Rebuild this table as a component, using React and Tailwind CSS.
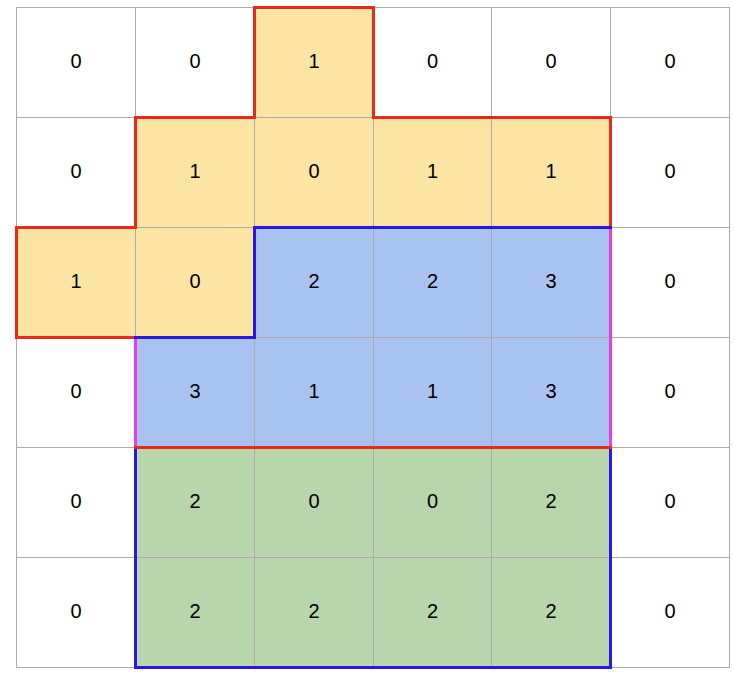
import React from "react";

const rows = [
  ["0", "0", "1", "0", "0", "0"],
  ["0", "1", "0", "1", "1", "0"],
  ["1", "0", "2", "2", "3", "0"],
  ["0", "3", "1", "1", "3", "0"],
  ["0", "2", "0", "0", "2", "0"],
  ["0", "2", "2", "2", "2", "0"],
];

// which fill each cell has: y = yellow, b = blue, g = green
const fills = [
  ["", "", "y", "", "", ""],
  ["", "y", "y", "y", "y", ""],
  ["y", "y", "b", "b", "b", ""],
  ["", "b", "b", "b", "b", ""],
  ["", "g", "g", "g", "g", ""],
  ["", "g", "g", "g", "g", ""],
];

const fillClass = {
  y: "bg-[#fce5a3]",
  b: "bg-[#a9c3f0]",
  g: "bg-[#b7d6ab]",
  "": "bg-white",
};

const X = [0.5, 119.5, 238.5, 357.5, 475.5, 594.5, 713.5];
const Y = [0.5, 110.5, 220.5, 330.5, 440.5, 550.5, 660.5];

const RED = "#e8291e";
const BLUE = "#2b17e4";
const PINK = "#e63de6";

const Outlines = () => (
  <svg
    className="absolute left-0 top-0 pointer-events-none overflow-visible"
    width="714"
    height="661"
    fill="none"
    strokeWidth="3"
    strokeLinejoin="miter"
  >
    <path
      stroke={RED}
      d={`M${X[2]},${Y[0]} H${X[3]} V${Y[1]} H${X[5]} V${Y[2]} H${X[2]} V${Y[3]} H${X[0]} V${Y[2]} H${X[1]} V${Y[1]} H${X[2]} Z`}
    />
    <path stroke={PINK} d={`M${X[5]},${Y[2]} V${Y[4]} M${X[1]},${Y[3]} V${Y[4]}`} />
    <path
      stroke={BLUE}
      strokeLinecap="square"
      d={`M${X[1]},${Y[3]} H${X[2]} V${Y[2]} H${X[5]}`}
    />
    <path stroke={BLUE} strokeLinecap="square" d={`M${X[1]},${Y[4]} V${Y[6]} H${X[5]} V${Y[4]}`} />
    <path stroke={RED} strokeLinecap="square" d={`M${X[1]},${Y[4]} H${X[5]}`} />
  </svg>
);

export default function App() {
  return (
    <div className="w-[735px] h-[675px] bg-white pt-[7px] pl-[16px] font-['Liberation_Sans',Arial,sans-serif]">
      <div className="relative w-[714px]">
        <div className="grid grid-cols-[119px_119px_119px_118px_119px_119px] grid-rows-[repeat(6,110px)] border-l border-t border-[#ababab]">
          {rows.map((row, r) =>
            row.map((v, c) => (
              <div
                key={`${r}-${c}`}
                className={`flex items-center justify-center border-r border-b border-[#ababab] text-[20px] leading-none pb-[3px] text-black ${fillClass[fills[r][c]]}`}
              >
                {v}
              </div>
            ))
          )}
        </div>
        <Outlines />
      </div>
    </div>
  );
}
